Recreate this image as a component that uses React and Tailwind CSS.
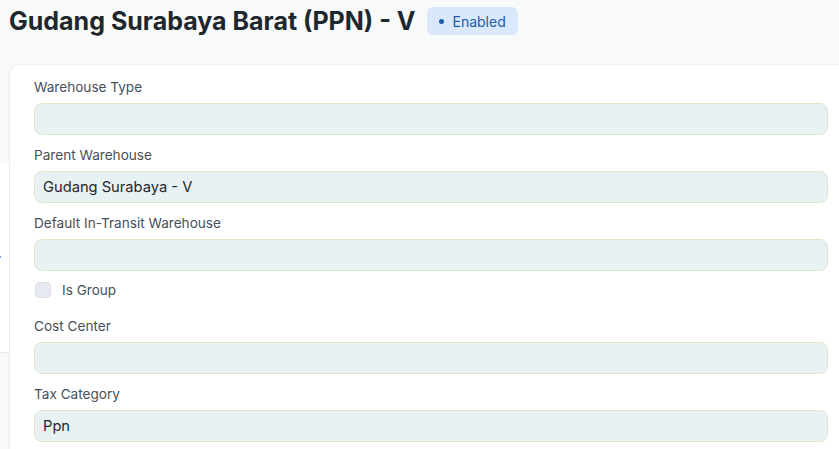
import React from "react";

const fields = [
  { label: "Warehouse Type", value: "" },
  { label: "Parent Warehouse", value: "Gudang Surabaya - V" },
  { label: "Default In-Transit Warehouse", value: "" },
];

const fieldsAfter = [
  { label: "Cost Center", value: "" },
  { label: "Tax Category", value: "Ppn" },
];

function Field({ label, value }) {
  return (
    <div className="flex flex-col">
      <label className="h-4 text-[13.6px] leading-4 text-[#474f5a]">{label}</label>
      <div className="mt-2 flex h-8 items-center rounded-lg border border-[#dde8c9] bg-[#e9f2f2] px-2 text-[14.7px] text-[#1f272e]">
        {value}
      </div>
    </div>
  );
}

export default function App() {
  return (
    <div
      className="flex min-h-[449px] w-[839px] overflow-hidden bg-[#f8f9f9]"
      style={{ fontFamily: "Inter, 'Noto Sans', sans-serif" }}
    >
      {/* collapsed sidebar edge */}
      <div className="flex w-[9px] shrink-0 flex-col">
        <div className="h-[163px]" />
        <div className="relative h-[190px] border-b border-[#e6e9ec] bg-white">
          <span className="absolute left-0 top-[93px] h-[2px] w-[1px] bg-[#6fa3e0]" />
        </div>
      </div>

      <div className="flex min-w-0 flex-1 flex-col">
        <div className="flex h-[64px] items-start pt-[7px]">
          <div className="flex h-7 items-center gap-3">
            <h1 className="text-[25px] font-bold leading-7 text-[#1f272e]">
              Gudang Surabaya Barat (PPN) - V
            </h1>
            <span className="flex h-7 items-center gap-2 rounded-md bg-[#d9e9fb] pl-3 pr-3 text-[14px] text-[#1d5ba8]">
              <span className="h-[5px] w-[5px] rounded-full bg-[#1d5ba8]" />
              Enabled
            </span>
          </div>
        </div>

        <div className="flex-1 rounded-tl-xl border-l border-t border-[#eceff1] bg-white pl-6 pr-[11px] pt-[14px] shadow-[0_0_2px_rgba(0,0,0,0.04)]">
          <div className="flex flex-col gap-3">
            {fields.map((f) => (
              <Field key={f.label} {...f} />
            ))}
          </div>

          <div className="mt-[11px] flex h-4 items-center gap-[11px] pl-px">
            <span className="h-4 w-4 rounded border border-[#dde1e7] bg-[#e6e9f0]" />
            <span className="text-[13.6px] text-[#474f5a]">Is Group</span>
          </div>

          <div className="mt-5 flex flex-col gap-3">
            {fieldsAfter.map((f) => (
              <Field key={f.label} {...f} />
            ))}
          </div>
        </div>
      </div>
    </div>
  );
}
